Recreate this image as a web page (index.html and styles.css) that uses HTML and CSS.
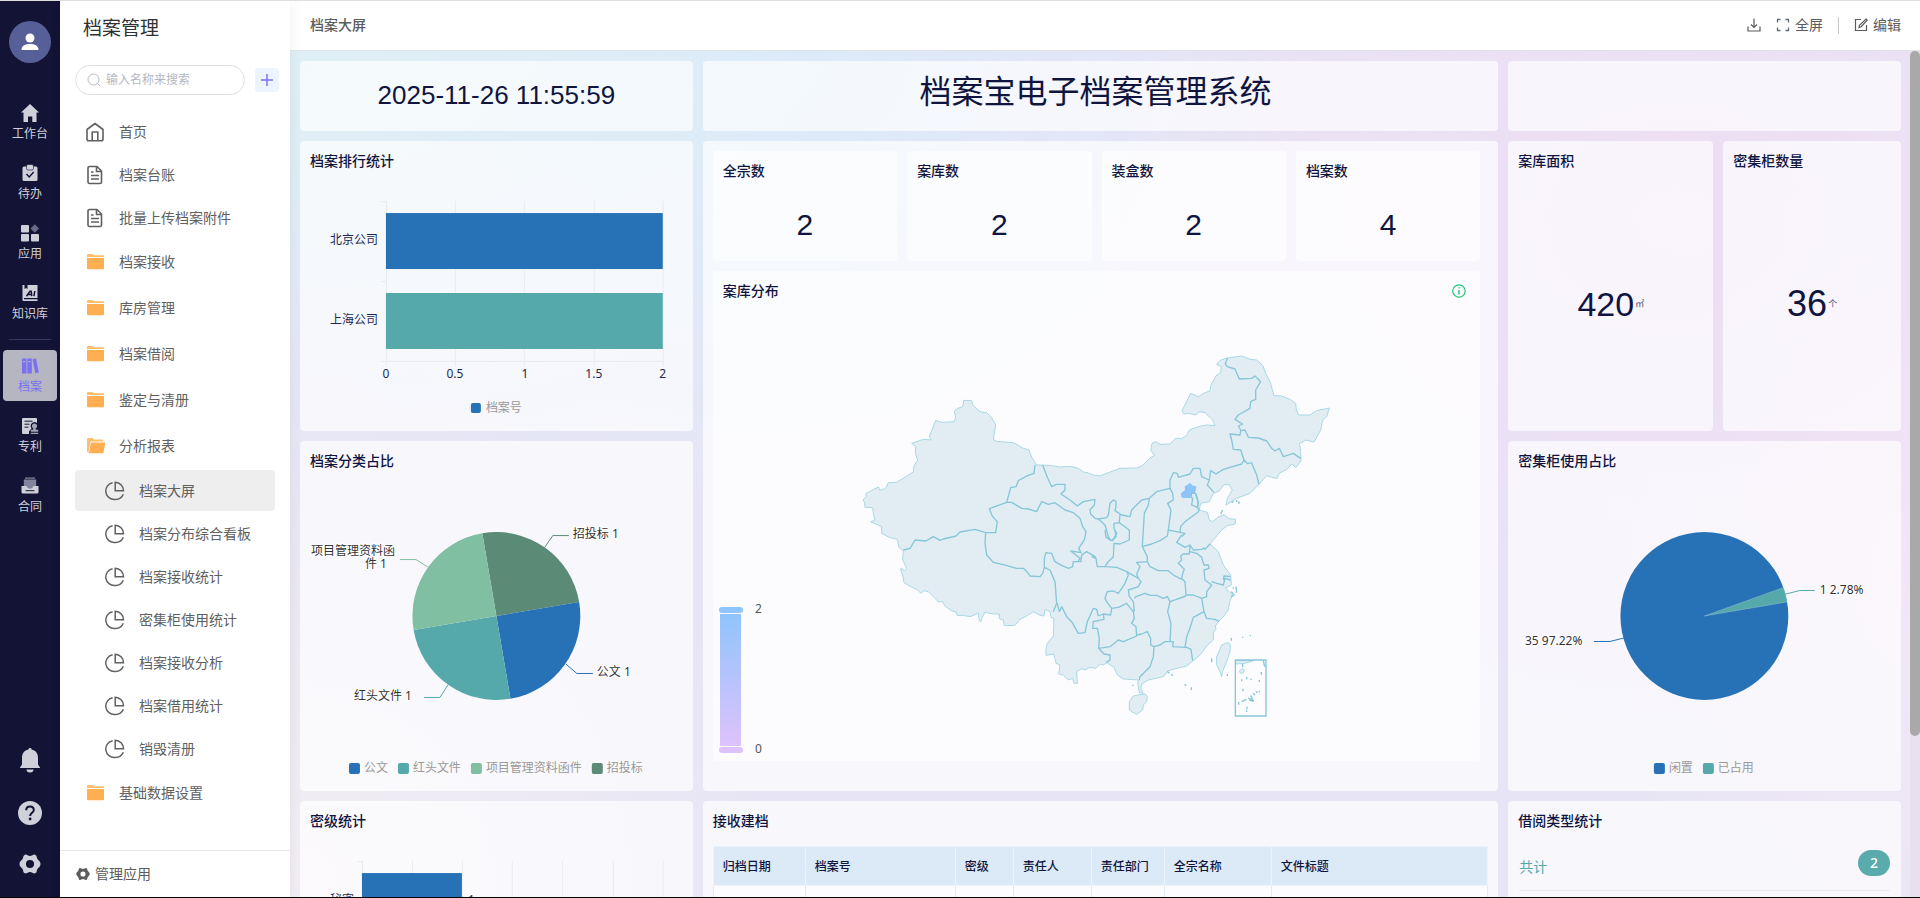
FILE: index.html
```html
<!DOCTYPE html>
<html lang="zh-CN">
<head>
<meta charset="utf-8">
<title>档案管理</title>
<link rel="stylesheet" href="styles.css">
</head>
<body>
<svg class="defs" width="0" height="0" aria-hidden="true">
  <symbol id="i-doc" viewBox="0 0 20 20"><path d="M4.500 1.500h7.500l4.500 4.500v11a1.500 1.500 0 0 1-1.500 1.500H4.500A1.500 1.500 0 0 1 3 17V3a1.500 1.500 0 0 1 1.500-1.500zM11.500 1.500v5h5M6 7h2.500M6 10.500h8M6 14h8" fill="none" stroke="currentColor" stroke-width="1.600" stroke-linejoin="round"/></symbol>
  <symbol id="i-folder" viewBox="0 0 20 20"><path d="M2 3a1 1 0 0 1 1-1h4.500L9 3.200h9.200a.8.8 0 0 1 .8.8v1H2z" fill="#ffbd6e"/><path d="M2 6h17v10a1.200 1.200 0 0 1-1.200 1.200H3.200A1.200 1.200 0 0 1 2 16z" fill="#ffae52"/></symbol>
  <symbol id="i-open" viewBox="0 0 20 20"><path d="M2 3a1 1 0 0 1 1-1h4.500L9 3.500h8.500a.8.800 0 0 1 .8.800v1.200H5.500L3.500 16.500H3a1 1 0 0 1-1-1z" fill="#ffbd6e"/><path d="M6 6.500h14.500l-2 10a1 1 0 0 1-1 .8H3.800z" fill="#ffae52"/></symbol>
  <symbol id="i-pie" viewBox="0 0 20 20"><path d="M7.600 1.700A8.500 8.500 0 0 0 10 18.500a8.500 8.500 0 0 0 8.300-5.200M10.200 1.200v8.600h8.300a8.600 8.600 0 0 0-8.300-8.600z" fill="none" stroke="currentColor" stroke-width="1.500"/></symbol>
  <symbol id="i-gear" viewBox="0 0 24 24"><path fill-rule="evenodd" d="M6.500 1.800C8.500 1.500 10 3.400 12 3.400s3.500-1.900 5.500-1.600c2 .5 1.700 3 2.600 4.800.9 1.700 3.400 2.500 3.400 5.400s-2.500 3.700-3.400 5.400c-.9 1.800-.6 4.300-2.600 4.800-2 .3-3.500-1.600-5.500-1.600s-3.500 1.900-5.500 1.600c-2-.5-1.700-3-2.600-4.800C3 15.700.5 14.900.5 12S3 8.300 3.900 6.600c.9-1.800.6-4.300 2.600-4.800zM12 7.600a4.400 4.400 0 1 0 0 8.800 4.400 4.400 0 0 0 0-8.800z" fill="currentColor"/></symbol>
</svg>
<div class="app">
  <nav class="rail">
    <button class="avatar" aria-label="用户"><svg width="20" height="20" viewBox="0 0 20 20"><circle cx="10" cy="6" r="4.500" fill="#fff"/><path d="M1.500 18c0-4.500 4-6 8.500-6s8.500 1.500 8.500 6z" fill="#fff"/></svg></button>
    <div class="rail-list">
      <a class="rail-item" href="#"><svg viewBox="0 0 20 20"><path d="M10 1l9 8.500h-2.500V19h-4.200v-5.500H8V19H3.500V9.500H1z" fill="currentColor"/></svg><span>工作台</span></a>
      <a class="rail-item" href="#"><svg viewBox="0 0 20 20"><path d="M4 3.500h12A1.500 1.500 0 0 1 17.500 5v11.500A1.500 1.500 0 0 1 16 18H4a1.500 1.500 0 0 1-1.500-1.500V5A1.500 1.500 0 0 1 4 3.500z" fill="currentColor"/><rect x="6.500" y="1.500" width="7" height="5.500" rx="1.500" fill="currentColor" stroke="#131435" stroke-width=".6"/><path d="M6.500 11l2.700 3 4.500-5" fill="none" stroke="#131435" stroke-width="1.400"/></svg><span>待办</span></a>
      <a class="rail-item" href="#"><svg viewBox="0 0 20 20"><rect x="1" y="2" width="8" height="7.500" rx="1" fill="currentColor"/><rect x="1" y="11" width="8" height="7.500" rx="1" fill="currentColor"/><rect x="11" y="11" width="8" height="7.500" rx="1" fill="currentColor"/><path d="M14.800 1.200l4.200 4.300-4.200 4.300-4.300-4.300z" fill="#686a85"/></svg><span>应用</span></a>
      <a class="rail-item" href="#"><svg viewBox="0 0 20 20"><path d="M2.500 2h2v4l1.500-1 1.500 1V2h10v13H4v1.200h13.500V18h-14a1 1 0 0 1-1-1z" fill="currentColor"/><path d="M6.500 13.200l3.500-5h1.200l.6 5M8.500 11.500h3M14.800 8l-.8 5.200" fill="none" stroke="#131435" stroke-width="1.500"/></svg><span>知识库</span></a>
      <hr class="rail-line">
      <a class="rail-item on" href="#"><svg viewBox="0 0 20 20"><path fill-rule="evenodd" d="M2 2.500h4.500v15H2zM3.200 5v1.200h2V5zM7.300 2.500h4.500v15H7.300zM8.500 5v1.200h2V5zM12.500 3l3.500-.6 2.800 14.200-3.500.7z" fill="currentColor"/></svg><span>档案</span></a>
      <a class="rail-item" href="#"><svg viewBox="0 0 20 20"><path d="M3 2h13a1 1 0 0 1 1 1v4a4 4 0 0 0-6.500 3.200l1 2.300-2.500 2.700V18H3a1 1 0 0 1-1-1V3a1 1 0 0 1 1-1z" fill="currentColor"/><path d="M4.500 5.200h8M4.500 8.200h5M4.500 11.200h4" stroke="#131435" stroke-width="1"/><path d="M14.500 7.500a2.500 2.500 0 0 1 1.300 4.700v1.600h2.400v2h-7.400v-2h2.400v-1.600a2.500 2.500 0 0 1 1.300-4.700zM10.800 16.700h7.400V18h-7.400z" fill="#a2a3b5"/></svg><span>专利</span></a>
      <a class="rail-item" href="#"><svg viewBox="0 0 20 20"><path d="M5 1.500h10v1.200H5zM3.800 3.500h12.400V12H3.800z" fill="#83849c"/><path d="M1.500 10h5c.3 1.600 1.500 2.300 3.500 2.300s3.200-.7 3.500-2.300h5v6a1.500 1.500 0 0 1-1.500 1.500H3A1.500 1.500 0 0 1 1.500 16z" fill="currentColor"/><path d="M5.500 14.700h9" stroke="#131435"/></svg><span>合同</span></a>
    </div>
    <div class="rail-foot">
      <button aria-label="通知"><svg width="24" height="26" viewBox="0 0 24 26"><path d="M12 1a1.600 1.600 0 0 1 1.600 1.400C17.500 3.200 20 6.500 20 10.500v7l2 3V21H2v-.5l2-3v-7c0-4 2.500-7.300 6.400-8.100A1.600 1.600 0 0 1 12 1zM8.500 22.500h7a3.500 3 0 0 1-7 0z" fill="currentColor"/></svg></button>
      <button aria-label="帮助"><svg width="24" height="24" viewBox="0 0 24 24"><circle cx="12" cy="12" r="12" fill="currentColor"/><path d="M8.200 9.200c0-2.300 1.600-3.700 3.800-3.700s3.800 1.400 3.800 3.500c0 2.800-3.700 2.900-3.700 6" fill="none" stroke="#131435" stroke-width="2"/><circle cx="12.100" cy="18" r="1.400" fill="#131435"/></svg></button>
      <button aria-label="设置"><svg width="22" height="22"><use href="#i-gear"/></svg></button>
    </div>
  </nav>

  <aside class="side">
    <h1 class="side-title">档案管理</h1>
    <div class="search-row">
      <label class="search"><svg width="14" height="14" viewBox="0 0 14 14"><circle cx="6.500" cy="6.500" r="5.500" fill="none" stroke="#b8bcc6"/><path d="M10.500 10.500l2.500 2.500" stroke="#b8bcc6"/></svg><input type="text" placeholder="输入名称来搜索" aria-label="搜索"></label>
      <button class="add" aria-label="新增"><svg width="12" height="12" viewBox="0 0 12 12"><path d="M6 0v12M0 6h12" stroke="#7470f5" stroke-width="1.400"/></svg></button>
    </div>
    <div class="menu">
      <a class="item" href="#"><svg viewBox="0 0 20 20"><path d="M2 7.500l8-6 8 6V17a1.800 1.800 0 0 1-1.800 1.800H3.800A1.800 1.800 0 0 1 2 17zM7.200 18.500V10h5.600v8.500" fill="none" stroke="currentColor" stroke-width="1.600" stroke-linejoin="round"/></svg>首页</a>
      <a class="item" href="#"><svg><use href="#i-doc"/></svg>档案台账</a>
      <a class="item" href="#"><svg><use href="#i-doc"/></svg>批量上传档案附件</a>
      <a class="item folder" href="#"><svg><use href="#i-folder"/></svg>档案接收</a>
      <a class="item folder" href="#"><svg><use href="#i-folder"/></svg>库房管理</a>
      <a class="item folder" href="#"><svg><use href="#i-folder"/></svg>档案借阅</a>
      <a class="item folder" href="#"><svg><use href="#i-folder"/></svg>鉴定与清册</a>
      <a class="item folder" href="#"><svg><use href="#i-open"/></svg>分析报表</a>
      <a class="item sub on" href="#"><svg><use href="#i-pie"/></svg>档案大屏</a>
      <a class="item sub" href="#"><svg><use href="#i-pie"/></svg>档案分布综合看板</a>
      <a class="item sub" href="#"><svg><use href="#i-pie"/></svg>档案接收统计</a>
      <a class="item sub" href="#"><svg><use href="#i-pie"/></svg>密集柜使用统计</a>
      <a class="item sub" href="#"><svg><use href="#i-pie"/></svg>档案接收分析</a>
      <a class="item sub" href="#"><svg><use href="#i-pie"/></svg>档案借用统计</a>
      <a class="item sub" href="#"><svg><use href="#i-pie"/></svg>销毁清册</a>
      <a class="item folder" href="#"><svg><use href="#i-folder"/></svg>基础数据设置</a>
    </div>
    <button class="manage"><svg width="14" height="14"><use href="#i-gear"/></svg>管理应用</button>
  </aside>

  <main class="main">
    <header class="top">
      <h2 class="top-title">档案大屏</h2>
      <div class="tools">
        <button aria-label="下载"><svg width="14" height="14" viewBox="0 0 14 14"><path d="M7 .5v9M4 6.500l3 3 3-3M1 8.500V13h12V8.500" fill="none" stroke="currentColor" stroke-width="1.200"/></svg></button>
        <button><svg width="14" height="14" viewBox="0 0 14 14"><path d="M1.500 4.500v-3h3M9.500 1.500h3v3M12.500 9.500v3h-3M4.500 12.500h-3v-3" fill="none" stroke="#5a6b85" stroke-width="1.300"/></svg>全屏</button>
        <i class="bar"></i>
        <button><svg width="14" height="14" viewBox="0 0 14 14"><path d="M7 1.500H1.500v11h11V7M12 1l1.200 1.200-6 6.500-2.200.8.500-2.200z" fill="none" stroke="currentColor" stroke-width="1.200"/></svg>编辑</button>
      </div>
    </header>
    <div class="board-wrap">
      <div class="board">
        <section class="card w3 clock">2025-11-26 11:55:59</section>
        <section class="card w6 banner">档案宝电子档案管理系统</section>
        <section class="card w3"></section>

        <section class="card w3">
          <h3>档案排行统计</h3>
          <svg class="chart" height="250" viewBox="0 40 393 250">
            <path class="grid" d="M86.500 60v165M155.500 60v165M224.500 60v165M294.500 60v165M363.500 60v165M81 60.500h5M81 140.500h5M81 220.500h283"/>
            <rect class="c1" x="86" y="72" width="277" height="56"/><rect class="c2" x="86" y="152" width="277" height="56"/>
            <g class="axis"><g text-anchor="end"><text x="78" y="103">北京公司</text><text x="78" y="183">上海公司</text></g>
            <g text-anchor="middle"><text x="86" y="237">0</text><text x="155" y="237">0.5</text><text x="225" y="237">1</text><text x="294" y="237">1.5</text><text x="363" y="237">2</text></g></g>
            <rect class="c1" x="171" y="262" width="10" height="10" rx="2"/><text class="lg" x="186" y="271">档案号</text>
          </svg>
        </section>

        <section class="card w6 center">
          <div class="stats">
            <div class="inner"><h3>全宗数</h3><p>2</p></div>
            <div class="inner"><h3>案库数</h3><p>2</p></div>
            <div class="inner"><h3>装盒数</h3><p>2</p></div>
            <div class="inner"><h3>档案数</h3><p>4</p></div>
          </div>
          <div class="inner mapbox">
            <div class="map-head"><h3>案库分布</h3><svg width="14" height="14" viewBox="0 0 14 14"><circle cx="7" cy="7" r="6.200" fill="none" stroke="#1cc87a" stroke-width="1.200"/><path d="M7 6v4.500M7 3.200v1.400" stroke="#1cc87a" stroke-width="1.400"/></svg></div>
            <svg class="chart" height="450" viewBox="0 40 767 450" preserveAspectRatio="xMinYMin meet">
              <defs><linearGradient id="vm" x1="0" y1="0" x2="0" y2="1"><stop offset="0" stop-color="#90c4fc"/><stop offset="1" stop-color="#dec2fc"/></linearGradient></defs>
              <rect x="7" y="343" width="21" height="132" fill="url(#vm)"/>
              <rect x="6" y="336" width="24" height="6" rx="3" fill="#90c4fc"/><rect x="6" y="476" width="24" height="6" rx="3" fill="#dec2fc"/>
              <g class="vml"><text x="42" y="342">2</text><text x="42" y="482">0</text></g>
              <g transform="translate(137 69) scale(.33333)">
                <path class="land" d="M560 375L578 375 604 377 630 381 662 379 685 385 700 396 715 399 730 405 750 408 775 398 810 385 860 384 877 377 898 356 913 346 902 330 906 310 918 305 930 313 960 312 977 295 995 296 1010 286 1018 270 1045 260 1070 255 1095 257 1088 240 1065 218 1048 215 1038 225 1015 220 1002 222 996 213 1022 160 1045 170 1065 158 1080 153 1082 137 1098 108 1112 97 1114 80 1100 73 1112 60 1132 54 1175 48 1200 58 1220 60 1238 76 1248 102 1260 125 1272 167 1295 168 1320 178 1337 190 1339 210 1346 225 1380 225 1400 212 1438 204 1430 230 1418 240 1412 270 1392 306 1368 300 1348 311 1352 330 1353 362 1338 382 1325 372 1312 387 1288 400 1280 416 1250 407 1225 435 1200 460 1160 475 1128 495 1132 475 1147 450 1138 434 1122 434 1108 453 1090 460 1078 485 1052 490 1048 510 1072 517 1078 540 1088 545 1103 532 1122 524 1138 536 1157 538 1155 552 1132 557 1115 570 1100 588 1080 612 1105 635 1120 675 1142 705 1144 735 1126 744 1148 765 1139 785 1135 810 1122 828 1105 845 1096 858 1098 868 1090 878 1090 900 1070 918 1055 940 1030 962 1010 978 985 984 955 992 940 1010 895 1020 875 1032 872 1045 880 1060 868 1058 863 1030 865 1020 820 1017 802 1005 792 982 770 968 760 975 750 972 738 985 720 982 705 990 695 986 680 995 682 1030 672 1030 668 1015 655 1020 640 1005 626 1002 630 975 618 970 612 942 588 946 588 925 592 910 610 888 612 835 603 832 600 815 585 808 582 828 570 826 550 815 530 828 510 838 495 856 463 857 460 840 448 836 448 822 430 822 405 817 397 832 392 846 388 842 385 820 360 830 340 826 322 827 318 816 304 812 285 798 278 785 265 786 255 775 235 755 222 752 213 760 200 748 182 740 162 728 158 705 152 690 154 684 163 692 170 685 158 660 160 632 147 622 142 598 120 593 95 580 95 560 77 552 62 546 75 540 70 520 68 503 45 502 44 488 39 480 48 470 48 460 70 449 85 441 90 451 107 446 115 428 140 427 190 396 192 378 203 360 196 340 197 320 185 310 220 298 243 300 238 290 257 241 275 247 313 245 317 232 313 215 320 206 338 200 342 181 365 182 368 195 390 215 410 218 424 232 437 255 430 298 440 304 490 308 520 325 537 330 545 352Z"/>
                <path class="border" d="M555 375L552 400 530 408 505 422 498 440 482 443 470 487 418 506 428 530 442 545 437 578 407 578 375 568 330 576 318 588 280 597 270 601 250 590 228 603 195 600 180 625 160 630M470 487L485 487 515 505 535 507 560 515 575 485 595 493 615 488 645 510 670 518 690 535 698 560 708 575 703 600 686 625 693 638 662 633 690 655 684 665 670 665 668 680 655 685 635 676 615 665 605 640 588 638 583 655 583 680M407 578L405 610 410 645 430 667 460 674 500 685 520 685 532 696 540 708 570 710 578 700 583 682 600 690 615 725 620 790 610 815M622 790L628 815 635 800 650 830 665 845 685 880 705 878 712 845 730 805 740 808 745 828M578 375L592 412 605 440 620 433 645 433 645 450 633 462 660 480 682 498 700 485 735 478 733 495 720 510 722 522 735 535 745 537M738 655L735 650 710 635 695 645 693 665 670 665M765 680L742 680 738 655 725 650"/>
                <g transform="translate(720 0)">
                  <path class="border" d="M25 537L45 555 55 590 60 600 68 602 80 580 72 565 72 550 88 548 90 522M25 537L50 533 55 525 60 490 70 480 78 484 78 500 75 512 95 525 120 530 125 510 155 480 178 475 200 455 240 445 248 460 250 480 233 490 243 510 235 570 270 577 272 560 285 545 325 515 328 510M240 445L240 420 250 398 262 400 265 412 300 402 310 385 330 385 335 410 358 420 352 435 372 457M358 420L362 392 378 402 400 388 455 372 462 360 452 330 430 328 425 300 420 282 450 285 452 272 465 270 475 292 505 294 530 303 545 325 555 333 568 325 580 350 610 340 632 355M452 270L445 258 458 252 435 238 445 225 480 205 482 185 497 178 497 150 512 125 495 108 485 115 448 117 435 87 412 80 406 72 412 54M462 360L473 371 485 368 490 382 500 405 507 433M178 475L175 495 163 520 160 570M88 548L118 570M270 577L285 580 275 590M328 510L322 502 325 488 318 462 308 456"/>
                  <path class="hot" d="M300 430L292 436 285 440 287 450 274 460 276 472 300 473 303 462 315 455 318 440 308 438Z"/>
                  <path class="border" d="M305 460L316 460 325 488 322 502 305 495 308 475 303 472Z"/>
                </g>
                <g transform="translate(720 570)">
                  <path class="border" d="M26 355L42 372 60 375 60 390 48 398M65 235L50 215 45 205 52 185 70 183 85 190 105 160 115 135 110 125 80 112 45 110 55 95 70 80 72 40 90 42 118 30 118 0M45 0L48 22 65 32 78 20 75 0M25 258L40 252 42 268 10 275 8 295 22 295 28 325 26 355 60 350 85 330 100 335 140 318 138 290 125 280 133 265 130 245 110 220 85 232 65 235 62 255 40 252M110 125L145 145 153 155 145 170 115 180 118 200 130 215 133 245M145 145L140 132 150 110 140 97 172 95 172 80 157 50 160 0M157 50L185 42 210 32 232 18 235 0M275 15L260 37 285 52 300 45 310 60 335 58 341 54 345 58 360 42M300 45L298 72 280 72 272 78 275 90 265 100 283 118 278 130 275 145 285 155 288 195 310 195 335 205 350 200 350 185 365 165 345 150 342 120 357 115 355 105 342 105 335 82 320 70 300 65M172 95L180 110 205 122 235 122 250 135 275 148M133 205L138 200 165 190 180 196 200 196 220 205 232 200 240 215 288 198M240 215L233 245 243 280 240 335M138 315L155 312 172 305 182 325 182 345 192 350 210 345 225 335 250 335 248 350 285 352 290 320 298 300 310 262 342 245 335 205M342 245L350 265 375 268 388 275M285 350L303 358 308 392M192 350L190 380 180 410 165 425 150 440 148 450M365 155L380 160 400 165 405 145 422 150M400 150L402 138 422 140"/>
                  <path class="land" d="M165 492L172 500 170 515 160 525 158 540 140 553 118 540 118 515 130 498 150 494ZM415 337L421 345 420 365 410 395 397 425 395 440 390 425 380 405 380 380 395 345Z"/>
                  <path class="land" d="M436 392h54l-25 8-27 2zM455 416l8 4-3 8-8 2-4-6z"/>
                  <path class="border" d="M436 390h92v168h-92zM458 402v10M520 392l4 18M514 426v8M470 440v8M483 446v4M455 448v6M508 450v6M459 476v8M508 482v5M446 516v8M471 530v8M470 541v5M455 514l14-6M474 504l18 8M482 496l6 12M489 490l6 6M498 484l4 4M478 510l12 4M365 385v12M412 432v6M284 462l4 6M304 472v8M424 324v8M458 320v4M481 315v4M430 172v4M438 170l2 18M424 185l10 12M424 200l6-4M232 424l6 6M244 432l4 6M129 464v4"/>
                </g>
                <path class="border" d="M1160 480v6M1167 484v8M1118 510l-6 12M1145 488l5-4"/>
              </g>
            </svg>
          </div>
        </section>

        <div class="w3 pair">
          <section class="card kpi"><h3>案库面积</h3><p class="k34">420<small>㎡</small></p></section>
          <section class="card kpi"><h3>密集柜数量</h3><p class="k36">36<small>个</small></p></section>
        </div>

        <section class="card w3">
          <h3>档案分类占比</h3>
          <svg class="chart" height="310" viewBox="0 40 393 310">
            <path class="c4" d="M196.500 175L182.400 92.200A84 84 0 0 1 279.300 160.900Z"/>
            <path class="c1" d="M196.500 175L279.300 160.900A84 84 0 0 1 210.600 257.800Z"/>
            <path class="c2" d="M196.500 175L210.600 257.800A84 84 0 0 1 113.700 189.100Z"/>
            <path class="c3" d="M196.500 175L113.700 189.100A84 84 0 0 1 182.400 92.200Z"/>
            <g fill="none"><path stroke="#5b8a76" d="M245 106L253 94.500H269"/><path stroke="#2771b6" d="M266 223L277 232.500H293"/><path stroke="#55a9aa" d="M148 244L140 256.500H124"/><path stroke="#81bfa3" d="M128 126L116 118.500H100"/></g>
            <g class="lb"><text x="273" y="97">招投标 1</text><text x="297" y="235">公文 1</text><text x="112" y="259" text-anchor="end">红头文件 1</text><text x="11" y="114">项目管理资料函</text><text x="65" y="127">件 1</text></g>
            <rect class="c1" x="49" y="322" width="11" height="11" rx="2"/><rect class="c2" x="98" y="322" width="11" height="11" rx="2"/><rect class="c3" x="171" y="322" width="11" height="11" rx="2"/><rect class="c4" x="292" y="322" width="11" height="11" rx="2"/>
            <g class="lg"><text x="64" y="331">公文</text><text x="113" y="331">红头文件</text><text x="186" y="331">项目管理资料函件</text><text x="307" y="331">招投标</text></g>
          </svg>
        </section>

        <section class="card w3">
          <h3>密集柜使用占比</h3>
          <svg class="chart" height="310" viewBox="0 40 393 310">
            <circle class="c1" cx="196.500" cy="175" r="84"/>
            <path class="c2" stroke="#a9cbe0" stroke-width=".4" d="M196.500 175L275.500 146.500A84 84 0 0 1 279.300 160.900Z"/>
            <path fill="none" stroke="#55a9aa" d="M278 153L292 149.500H307"/><path fill="none" stroke="#2771b6" d="M116 197L102 200.500H86"/>
            <g class="lb"><text x="312" y="153">1 2.78%</text><text x="17" y="204">35 97.22%</text></g>
            <rect class="c1" x="146" y="322" width="11" height="11" rx="2"/><rect class="c2" x="195" y="322" width="11" height="11" rx="2"/>
            <g class="lg"><text x="161" y="331">闲置</text><text x="210" y="331">已占用</text></g>
          </svg>
        </section>

        <section class="card w3">
          <h3>密级统计</h3>
          <svg class="chart" height="250" viewBox="0 40 393 250">
            <path class="grid" d="M62.500 60v165M112.500 60v165M162.500 60v165M212.500 60v165M262.500 60v165M313.500 60v165M363.500 60v165M57 60.500h5"/>
            <rect class="c1" x="62" y="72" width="100" height="56"/>
            <text class="axis" x="54" y="103" text-anchor="end">秘密</text><text class="lb" x="168" y="103">1</text>
          </svg>
        </section>

        <section class="card w6 records">
          <h3>接收建档</h3>
          <table>
            <colgroup><col class="a"><col class="b"><col class="c"><col class="d"><col class="e"><col class="f"><col></colgroup>
            <thead><tr><th>归档日期</th><th>档案号</th><th>密级</th><th>责任人</th><th>责任部门</th><th>全宗名称</th><th>文件标题</th></tr></thead>
            <tbody><tr><td></td><td></td><td></td><td></td><td></td><td></td><td></td></tr></tbody>
          </table>
        </section>

        <section class="card w3">
          <h3>借阅类型统计</h3>
          <div class="total"><span>共计</span><b>2</b></div>
        </section>
      </div>
      <div class="scroll"><i></i></div>
    </div>
  </main>
</div>
</body>
</html>
```
FILE: styles.css
```css
*{box-sizing:border-box}
body{margin:0;font:14px/20px "Noto Sans","Noto Sans CJK SC",sans-serif;color:#5c5c5c;background:#fff}
h1,h2,h3,p,hr{margin:0}
a{color:inherit;text-decoration:none}
button{border:0;background:none;padding:0;font:inherit;color:inherit;display:flex;align-items:center}
.defs{display:block;height:0}
.app{display:flex;height:100vh;border-top:1px solid #dedede;border-bottom:1px solid #000;overflow:hidden}

.rail{width:60px;flex:none;background:#131435;color:#d0d0da;display:flex;flex-direction:column;align-items:center;padding:20px 0 22px}
.avatar{width:42px;height:42px;border-radius:50%;background:#565f98;justify-content:center;flex:none}
.rail-list{width:100%;display:flex;flex-direction:column;gap:9px;margin-top:34px;padding:0 3px}
.rail-item{height:51px;border-radius:4px;display:flex;flex-direction:column;align-items:center;padding-top:6px;font-size:12px;line-height:20px;gap:1px}
.rail-item svg{width:20px;height:20px}
.rail-item.on{background:#b5b6c2;color:#7a70f2}
.rail-line{width:42px;border:0;border-top:1px solid #35365a;margin:2px auto 1px}
.rail-foot{margin-top:auto;display:flex;flex-direction:column;align-items:center;gap:28px}

.side{width:230px;flex:none;background:#fff;display:flex;flex-direction:column;position:relative;box-shadow:2px 0 12px rgba(0,0,0,.05)}
.side-title{font-size:19px;line-height:28px;font-weight:400;color:#303133;padding:13px 0 0 23px}
.search-row{display:flex;align-items:center;gap:10px;margin:23px 11px 0 15px}
.search{flex:1;min-width:0;height:30px;border:1px solid #dcdfe6;border-radius:15px;display:flex;align-items:center;gap:5px;padding:0 11px}
.search svg{flex:none}
.search input{flex:1;width:0;min-width:0;border:0;outline:0;padding:0;background:none;font:12px/18px "Noto Sans","Noto Sans CJK SC",sans-serif}
.search input::placeholder{color:#b4b8c2}
.add{width:24px;height:24px;flex:none;border-radius:4px;background:#ecf4ff;justify-content:center}
.menu{display:flex;flex-direction:column;gap:2px;padding:16px 15px 0}
.item{display:flex;align-items:center;gap:14px;height:41px;padding-left:10px;border-radius:4px;color:#606060}
.item svg{width:20px;height:20px;flex:none}
.item.folder{height:44px}
.item.sub{padding-left:30px}
.item.on{background:#eee}
.manage{margin-top:auto;height:47px;border-top:1px solid #e6e6e6;padding-left:16px;gap:5px;width:100%;flex:none}

.main{flex:1;min-width:0;display:flex;flex-direction:column}
.top{height:50px;flex:none;display:flex;align-items:center;justify-content:space-between;padding:0 19px 1px 20px;border-bottom:1px solid #e2e2e6;background:#fff}
.top-title{font-size:14px;line-height:20px;font-weight:500}
.tools{display:flex;align-items:center;gap:15px}
.tools button{gap:5px}
.bar{width:1px;height:17px;background:#c8c8c8}
.board-wrap{flex:1;min-height:0;display:flex;justify-content:space-between;overflow:hidden;background:
 radial-gradient(ellipse 45% 50% at 0 0,#def0f5 0,rgba(222,240,245,0) 100%),
 radial-gradient(ellipse 35% 55% at 28% 0,#dbe9fb 0,rgba(219,233,251,0) 100%),
 radial-gradient(ellipse 40% 60% at 85% 20%,#eeddf4 0,rgba(238,221,244,0) 100%),
 radial-gradient(ellipse 30% 60% at 0 100%,#f2eef3 0,rgba(242,238,243,0) 100%),
 radial-gradient(ellipse 20% 60% at 100% 60%,#f3e8f6 0,rgba(243,232,246,0) 100%),#e7e5f5}
.board{flex:1;min-width:0;display:grid;grid-template-columns:repeat(12,minmax(0,1fr));grid-template-rows:70px 290px 350px 290px;gap:10px;padding:10px 9px 10px 10px;align-self:flex-start}
.w3{grid-column:span 3}
.w6{grid-column:span 6}
.card{background:rgba(255,255,255,.67);border-radius:4px;overflow:hidden;min-width:0}
h3{font-size:14px;line-height:20px;font-weight:500;color:#101540;padding:10px}
.clock,.banner{display:flex;align-items:center;justify-content:center;color:#101540}
.clock{font:26px/30px "Liberation Sans",Arial,sans-serif;padding-bottom:2px}
.banner{font-size:32px;line-height:40px;padding:0 10px 10px 0}
.center{grid-row:2/4;grid-column:4/10;padding:10px 18px 30px 10px;display:flex;flex-direction:column;gap:10px}
.stats{display:grid;grid-template-columns:repeat(4,1fr);gap:10px}
.inner{background:rgba(255,255,255,.6);border-radius:4px;min-width:0}
.stats .inner{height:110px}
.stats p{font:30px/34px "Liberation Sans",Arial,sans-serif;text-align:center;color:#101540;padding-top:17px}
.mapbox{flex:1}
.map-head{display:flex;align-items:center;justify-content:space-between;padding-right:14px}
.pair{display:grid;grid-template-columns:15fr 13fr;gap:10px}
.kpi{display:flex;flex-direction:column}
.kpi p{flex:1;display:flex;align-items:center;justify-content:center;gap:1px;padding-bottom:4px;font-family:"Liberation Sans","Noto Sans CJK SC",sans-serif;color:#101540}
.k34{font-size:34px}
.k36{font-size:36px}
.kpi small{font-size:9px;color:#4c5070}

.chart{display:block;width:100%;font-size:12px}
.c1{fill:#2771b6}.c2{fill:#55a9aa}.c3{fill:#81bfa3}.c4{fill:#5b8a76}
.grid{stroke:#ebebee;fill:none}
.axis{fill:#22274f}
.lg{fill:#999}
.lb{fill:#333;stroke:#fff;stroke-width:2px;paint-order:stroke;stroke-linejoin:round}
.vml{fill:#555}
.land{fill:#e1edf3;stroke:#a9d8e4;stroke-width:3;stroke-linejoin:round}
.border{fill:none;stroke:#86c6d8;stroke-width:4;stroke-linejoin:round}
.hot{fill:#8fc4fb;stroke:#7cbcec;stroke-width:2}

.records{padding:0 10px}
.records h3{padding:10px 0}
table{width:100%;margin-top:5px;border-collapse:collapse;table-layout:fixed;font-size:12px;line-height:18px;color:#101540}
th{background:#dceaf7;height:39px;padding:1px 9px 0;text-align:left;font-weight:500;border:1px solid #edf3fb}
td{height:40px;background:rgba(255,255,255,.6);border:1px solid #e3eaf6}
.a{width:92px}.b{width:150px}.c{width:58px}.d{width:78px}.e{width:73px}.f{width:107px}
.total{display:flex;justify-content:space-between;align-items:center;margin:0 11px;height:50px;padding-bottom:5px;border-bottom:1px solid #ecebf0;color:#55a9aa}
.total span{padding-top:8px}
.total b{min-width:32px;height:26px;line-height:26px;border-radius:13px;background:#5aabac;color:#fff;font-weight:500;text-align:center}
.scroll{width:10px;flex:none;background:rgba(230,220,235,.6)}
.scroll i{display:block;height:81%;border-radius:5px;background:#a9a9a9}
```
